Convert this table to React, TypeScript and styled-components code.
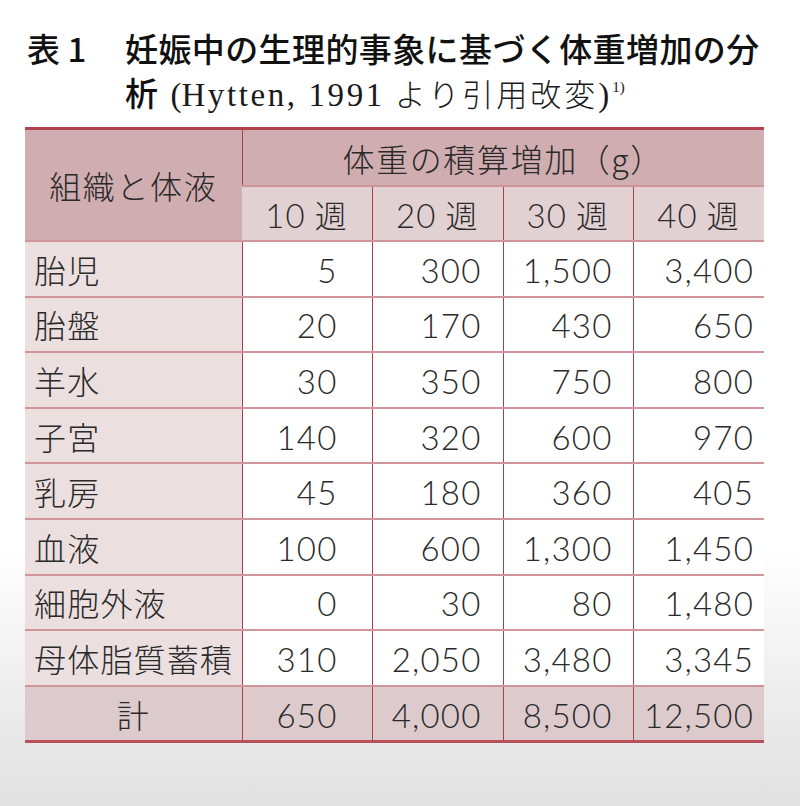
import React from "react";
import styled, { createGlobalStyle } from "styled-components";

const GlobalStyle = createGlobalStyle`
	html, body {
		margin: 0;
		padding: 0;
	}
	body {
		width: 800px;
		height: 806px;
		overflow: hidden;
		background: linear-gradient(to bottom, #ffffff 0%, #ffffff 68%, #ededed 86%, #e1e1e1 100%);
		font-family: "Noto Sans CJK JP", "Noto Sans", sans-serif;
		color: #222;
	}
`;

const Page = styled.div`
	padding: 26px 36px 0 25px;
`;

const Caption = styled.div`
	display: flex;
	align-items: flex-start;
	font-size: 33px;
	line-height: 44px;
	color: #111;
`;

const CaptionLabel = styled.div`
	flex: 0 0 98px;
	padding-left: 2px;
	font-weight: 500;
	white-space: pre;
`;

const CaptionText = styled.div`
	flex: 1;
	font-weight: 500;
	letter-spacing: 0.4px;
	white-space: nowrap;
`;

const Source = styled.span`
	font-weight: 300;
	font-size: 31px;
	letter-spacing: 3px;
	color: #1a1a1a;
`;

const Serif = styled.span<{ $wide?: boolean; $gap?: number }>`
	font-family: "Liberation Serif", "Noto Sans CJK JP", serif;
	font-weight: 400;
	font-size: 33px;
	letter-spacing: ${(p) => (p.$wide ? "2.6px" : "0")};
	margin-left: ${(p) => p.$gap ?? 0}px;
`;

const Sup = styled.sup`
	font-family: "Liberation Serif", serif;
	font-weight: 400;
	font-size: 15px;
	vertical-align: 14px;
	line-height: 0;
	margin-left: 3px;
	letter-spacing: 0;
`;

const Table = styled.table`
	margin-top: 10px;
	width: 739px;
	border-collapse: collapse;
	table-layout: fixed;
	border-top: 3px solid #b3424e;
	border-bottom: 3px solid #b8505a;
	font-weight: 300;
	color: #2a2a2a;
`;

type Tone = "head" | "sub" | "label" | "plain" | "total";

const tones: Record<Tone, string> = {
	head: "#d0adb0",
	sub: "#e2d1d2",
	label: "#ecdfe0",
	plain: "#ffffff",
	total: "#ddcacc",
};

const Cell = styled.td<{ $tone: Tone; $align?: "left" | "right" | "center"; $pad?: number; $h?: number }>`
	background: ${(p) => tones[p.$tone]};
	text-align: ${(p) => p.$align ?? "right"};
	padding: 0 ${(p) => p.$pad ?? 0}px 0 ${(p) => (p.$align === "left" ? 9 : 0)}px;
	height: ${(p) => p.$h ?? 53.6}px;
	font-size: 32px;
	letter-spacing: 1.2px;
	border-left: 1px solid #a8404b;
	border-top: 2px solid #cf959a;
	white-space: nowrap;
	&:first-child {
		border-left: none;
	}
`;

const HeadCell = styled(Cell).attrs({ as: "th" })`
	font-weight: 300;
	text-align: center;
	padding: 0;
	letter-spacing: 1.6px;
`;

const Num = styled.span`
	font-family: "Lato", "Noto Sans CJK JP", sans-serif;
	font-weight: 300;
	font-size: 33px;
	letter-spacing: 1.2px;
`;

const rows: [string, string[]][] = [
	["胎児", ["5", "300", "1,500", "3,400"]],
	["胎盤", ["20", "170", "430", "650"]],
	["羊水", ["30", "350", "750", "800"]],
	["子宮", ["140", "320", "600", "970"]],
	["乳房", ["45", "180", "360", "405"]],
	["血液", ["100", "600", "1,300", "1,450"]],
	["細胞外液", ["0", "30", "80", "1,480"]],
	["母体脂質蓄積", ["310", "2,050", "3,480", "3,345"]],
];

const total = ["650", "4,000", "8,500", "12,500"];
const pads = [34, 21, 20, 10];

export default function App() {
	return (
		<>
			<GlobalStyle />
			<Page>
				<Caption>
					<CaptionLabel>表 1</CaptionLabel>
					<CaptionText>
						妊娠中の生理的事象に基づく体重増加の分
						<br />析
						<Source>
							<Serif $gap={12}>(</Serif>
							<Serif $wide>Hytten, 1991</Serif> より引用改変
							<Serif>)</Serif>
							<Sup>1)</Sup>
						</Source>
					</CaptionText>
				</Caption>
				<Table>
					<colgroup>
						<col style={{ width: 217 }} />
						<col style={{ width: 130 }} />
						<col style={{ width: 131 }} />
						<col style={{ width: 130 }} />
						<col style={{ width: 131 }} />
					</colgroup>
					<thead>
						<tr>
							<HeadCell $tone="head" rowSpan={2}>
								組織と体液
							</HeadCell>
							<HeadCell $tone="head" colSpan={4} $h={55}>
								体重の積算増加（g）
							</HeadCell>
						</tr>
						<tr>
							{["10", "20", "30", "40"].map((w) => (
								<HeadCell key={w} $tone="sub" $h={53}>
									<Num>{w}</Num> 週
								</HeadCell>
							))}
						</tr>
					</thead>
					<tbody>
						{rows.map(([label, vals]) => (
							<tr key={label}>
								<Cell $tone="label" $align="left">
									{label}
								</Cell>
								{vals.map((v, i) => (
									<Cell key={i} $tone="plain" $pad={pads[i]}>
										<Num>{v}</Num>
									</Cell>
								))}
							</tr>
						))}
						<tr>
							<Cell $tone="total" $align="center">
								計
							</Cell>
							{total.map((v, i) => (
								<Cell key={i} $tone="total" $pad={pads[i]}>
									<Num>{v}</Num>
								</Cell>
							))}
						</tr>
					</tbody>
				</Table>
			</Page>
		</>
	);
}
